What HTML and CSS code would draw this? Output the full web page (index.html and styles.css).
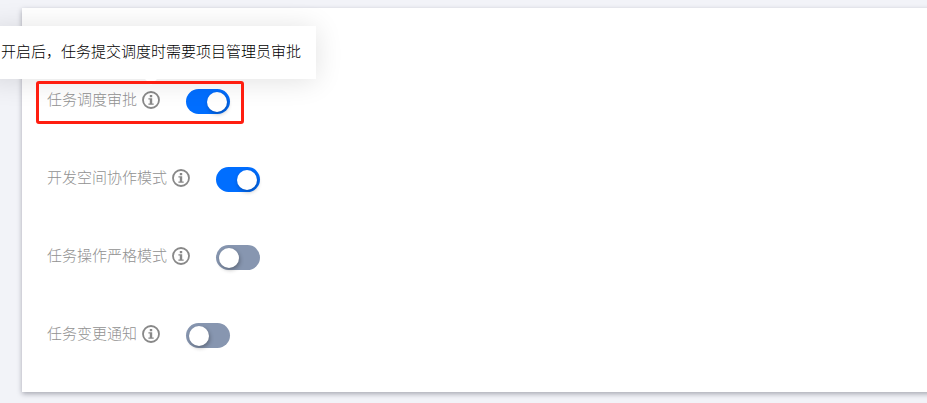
FILE: index.html
```html
<!DOCTYPE html>
<html lang="zh-CN">
<head>
    <meta charset="UTF-8">
    <meta name="viewport" content="width=device-width, initial-scale=1.0">
    <title>项目设置</title>
    <link rel="stylesheet" href="styles.css">
</head>
<body>
    <svg class="sprite" aria-hidden="true">
        <symbol id="info" viewBox="0 0 18 18">
            <circle cx="9" cy="9" r="8" fill="none" stroke="currentColor" stroke-width="1.8"/>
            <path d="M7.8 4h2.4v2.2H7.8zM6.4 7.3h3.8v5.1h1.5v1.4H6.4v-1.4h1.4V8.6H6.4z" fill="currentColor"/>
        </symbol>
    </svg>

    <main class="card">
        <div class="row highlight">
            <label for="approval">任务调度审批</label>
            <span class="info">
                <svg><use href="#info"/></svg>
                <span class="tooltip" role="tooltip">开启后，任务提交调度时需要项目管理员审批</span>
            </span>
            <input class="switch" id="approval" type="checkbox" role="switch" checked>
        </div>
        <div class="row">
            <label for="collab">开发空间协作模式</label>
            <span class="info"><svg><use href="#info"/></svg></span>
            <input class="switch" id="collab" type="checkbox" role="switch" checked>
        </div>
        <div class="row">
            <label for="strict">任务操作严格模式</label>
            <span class="info"><svg><use href="#info"/></svg></span>
            <input class="switch" id="strict" type="checkbox" role="switch">
        </div>
        <div class="row">
            <label for="notify">任务变更通知</label>
            <span class="info"><svg><use href="#info"/></svg></span>
            <input class="switch" id="notify" type="checkbox" role="switch">
        </div>
    </main>
</body>
</html>
```
FILE: styles.css
```css
* {
    box-sizing: border-box;
}

body {
    margin: 0;
    padding: 8px 0 11px 22px;
    background-color: #f2f3f8;
    font-family: "Noto Sans CJK SC", sans-serif;
    font-size: 15px;
    font-weight: 300;
    line-height: 20px;
    overflow-x: hidden;
}

.sprite {
    position: absolute;
    width: 0;
    height: 0;
}

.card {
    display: flex;
    flex-direction: column;
    align-items: flex-start;
    gap: 35px;
    padding: 73px 14px 34px;
    margin-right: -8px;
    background-color: #fff;
    box-shadow: 0 2px 5px rgba(30, 32, 50, 0.35);
}

.row {
    position: relative;
    display: flex;
    align-items: flex-start;
    padding: 8px 14px 10px 11px;
    color: #888;
}

.row label {
    color: #919191;
}

.highlight::after {
    content: "";
    position: absolute;
    inset: 0;
    z-index: 2;
    border: 3px solid #ff1e10;
    border-radius: 3px;
    pointer-events: none;
}

.info {
    position: relative;
    width: 18px;
    height: 18px;
    margin: 2px 26px 0 5px;
}

.info svg {
    display: block;
    width: 18px;
    height: 18px;
}

.tooltip {
    position: absolute;
    left: 50%;
    bottom: calc(100% + 12px);
    z-index: 1;
    transform: translateX(-50%);
    padding: 15px 15px 18px;
    background-color: #fff;
    color: #000;
    white-space: nowrap;
    box-shadow: 0 2px 28px rgba(0, 0, 0, 0.12);
}

.tooltip::after {
    content: "";
    position: absolute;
    top: 100%;
    left: 50%;
    transform: translateX(-50%);
    border: 6px solid transparent;
    border-top-color: #fff;
    border-bottom: 0;
}

.switch {
    appearance: none;
    width: 44px;
    height: 25px;
    margin: 0;
    padding: 3px;
    border-radius: 13px;
    background-color: #8796b0;
    cursor: pointer;
}

.switch::before {
    content: "";
    display: block;
    width: 20px;
    height: 20px;
    border-radius: 50%;
    background-color: #fff;
    box-shadow: 1px 2px 4px rgba(0, 0, 0, 0.3);
}

.switch:checked {
    background-color: #006eff;
}

.switch:checked::before {
    margin-left: auto;
}
```
